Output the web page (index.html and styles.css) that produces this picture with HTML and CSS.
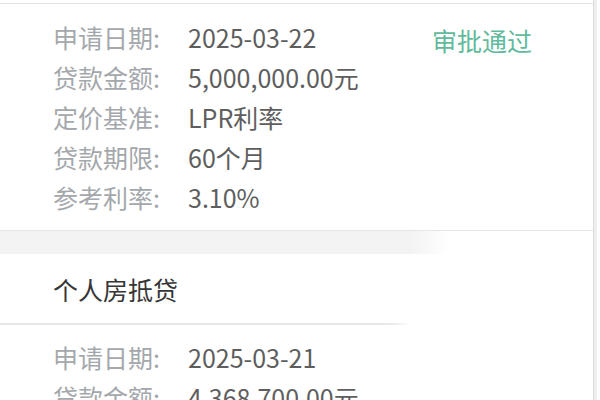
FILE: index.html
```html
<!DOCTYPE html>
<html lang="zh-CN">
<head>
<meta charset="utf-8">
<link rel="stylesheet" href="styles.css">
</head>
<body>
<div class="page">
  <section class="card">
    <div class="card-body">
      <div class="rows">
        <div class="row"><span class="label">申请日期:</span><span class="value">2025-03-22</span></div>
        <div class="row"><span class="label">贷款金额:</span><span class="value">5,000,000.00元</span></div>
        <div class="row"><span class="label">定价基准:</span><span class="value">LPR利率</span></div>
        <div class="row"><span class="label">贷款期限:</span><span class="value">60个月</span></div>
        <div class="row"><span class="label">参考利率:</span><span class="value">3.10%</span></div>
      </div>
      <div class="status">审批通过</div>
    </div>
  </section>
  <div class="band"></div>
  <section class="card2">
    <div class="title">个人房抵贷</div>
    <div class="divider"></div>
    <div class="card-body second">
      <div class="rows">
        <div class="row"><span class="label">申请日期:</span><span class="value">2025-03-21</span></div>
        <div class="row"><span class="label">贷款金额:</span><span class="value">4,368,700.00元</span></div>
      </div>
    </div>
  </section>
</div>
</body>
</html>
```
FILE: styles.css
```css
html, body {
  margin: 0;
  padding: 0;
  background: #ffffff;
  overflow: hidden;
}
body {
  font-family: "Noto Sans CJK SC", "Noto Sans", sans-serif;
  width: 600px;
  height: 400px;
}
.page {
  width: 594px;
  height: 400px;
  border-right: 1px solid #dcdcdc;
  box-shadow: 3px 0 0 #eeeeee;
  padding-top: 3px;
  box-sizing: border-box;
}
.card {
  border-top: 1px solid #e2e2e2;
}
.card-body {
  display: grid;
  grid-template-columns: 379px auto;
  padding: 13px 0 13px 53px;
}
.card-body.second {
  padding-top: 12px;
}
.row {
  display: flex;
  height: 40px;
  line-height: 40px;
  font-size: 25px;
}
.label {
  width: 135px;
  color: #a4a8ac;
}
.value {
  color: #5e5e5e;
}
.status {
  color: #62ba9c;
  font-size: 25px;
  line-height: 40px;
  padding-top: 3px;
}
.band {
  height: 23px;
  border-top: 1px solid #e6e6e6;
  background: linear-gradient(to right, #f3f3f3 0, #f3f3f3 410px, #ffffff 450px);
}
.title {
  font-size: 25px;
  line-height: 40px;
  color: #363636;
  padding: 15px 0 14px 53px;
}
.divider {
  width: 410px;
  height: 2px;
  background: linear-gradient(to right, #e8e8e8 0, #e8e8e8 390px, #ffffff 410px);
}
```
